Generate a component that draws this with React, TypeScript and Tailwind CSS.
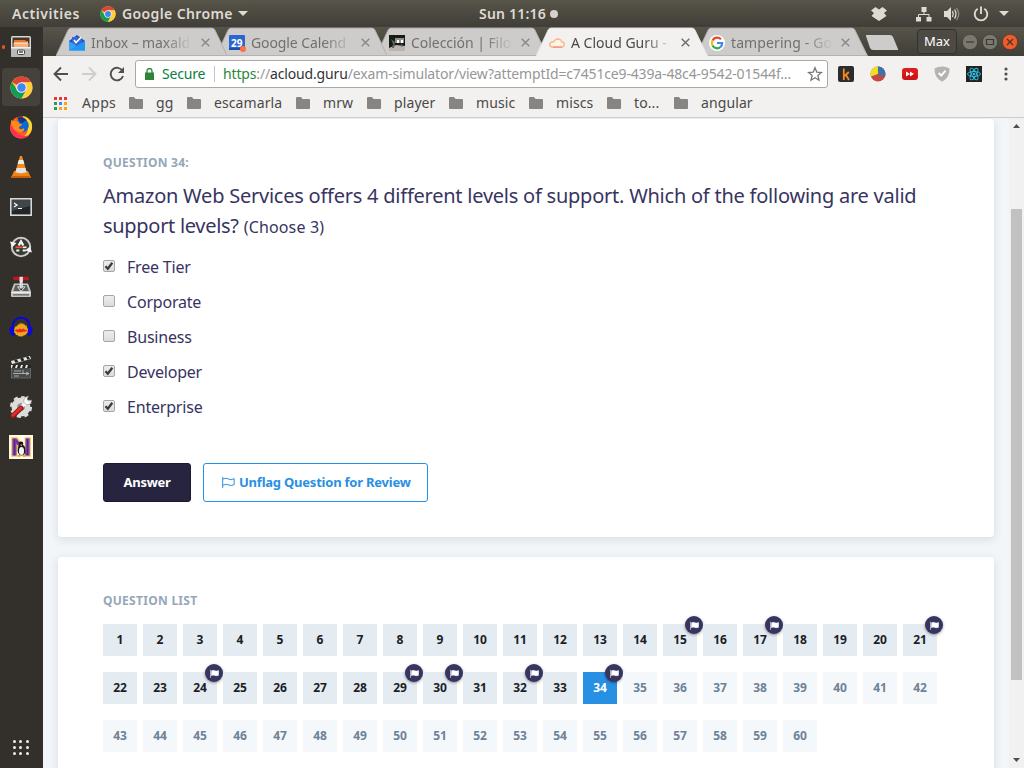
import React from "react";

type Mark = { label: string; width: string };

const bookmarks: Mark[] = [
  { label: "gg", width: "w-[58px]" },
  { label: "escamarla", width: "w-[109px]" },
  { label: "mrw", width: "w-[71px]" },
  { label: "player", width: "w-[82px]" },
  { label: "music", width: "w-[80px]" },
  { label: "miscs", width: "w-[78px]" },
  { label: "to...", width: "w-[67px]" },
  { label: "angular", width: "w-[100px]" },
];

const options = [
  { label: "Free Tier", checked: true },
  { label: "Corporate", checked: false },
  { label: "Business", checked: false },
  { label: "Developer", checked: true },
  { label: "Enterprise", checked: true },
];

const flagged = [15, 17, 21, 24, 29, 30, 32, 34];

function ChromeIcon({ className }: { className: string }) {
  return (
    <svg viewBox="0 0 48 48" className={className}>
      <circle cx="24" cy="24" r="23" fill="#fcc934" />
      <path d="M24 24 L4.1 12.5 A23 23 0 0 1 43.9 12.5 L24 13Z" fill="#db4437" />
      <path d="M4.1 12.5 A23 23 0 0 0 24 47 L34 29.5 L24 24 L14.5 29Z" fill="#0f9d58" />
      <path d="M24 13 H43.9 A23 23 0 0 1 24 47 L33.6 29.5Z" fill="#ffcd40" />
      <circle cx="24" cy="24" r="11" fill="#f1f1f1" />
      <circle cx="24" cy="24" r="8.8" fill="#4285f4" />
    </svg>
  );
}

function FilesIcon() {
  return (
    <svg viewBox="0 0 22 24" className="h-[24px] w-[22px]">
      <rect x="1" y="1" width="20" height="21" rx="1.5" fill="#d8d8d6" />
      <rect x="2.5" y="2.5" width="17" height="10" fill="#4a3427" />
      <path d="M4 5h11l1 1h2v3H4z" fill="#e8762c" />
      <path d="M3.500 8h15v4h-15z" fill="#f4b27a" />
      <path d="M4 7.500h14v1H4z" fill="#fff3e4" />
      <rect x="1" y="12" width="20" height="10" rx="1" fill="#b9b9b7" />
      <path d="M1 12h20v1.500H1z" fill="#eee" />
      <rect x="7.500" y="15" width="7" height="4.500" rx="1" fill="#f5f5f5" stroke="#444" />
      <path d="M9 17h4" stroke="#333" strokeWidth="1.300" />
    </svg>
  );
}

function FirefoxIcon() {
  return (
    <svg viewBox="0 0 24 24" className="h-[24px] w-[24px]">
      <circle cx="12" cy="12.500" r="11" fill="#ff5a1f" />
      <path d="M14 1c6 1 10 6 9 12-.8 6-5 10-11 10 6-3 8-7 6-12-1-4-5-5-4-10z" fill="#ffd42a" />
      <path d="M1 11c0 7 5 12.500 11.500 12.500 3 0 6-1.500 7.500-3.500-5 2-11 1-13-4-1-3-3-5-6-5z" fill="#ff2f5b" />
      <circle cx="13" cy="10.500" r="6.800" fill="#0a67d8" />
      <path d="M8 3c3-2 8-1 10 3-3-1-3 2-5 2s-3-3-5-5z" fill="#17347e" />
      <path d="M2 5c1 1 3 1 5 1 2 0 3 1 3 2.500l3 .5c0 2-3 2-3 4 1 2 4 1 5 0 1 3-2 5-5 4-4 0-8-5-8-12z" fill="#ff8a16" />
    </svg>
  );
}

function VlcIcon() {
  return (
    <svg viewBox="0 0 22 24" className="h-[24px] w-[22px]">
      <path d="M4 16h14l3 7H1z" fill="#ef8214" />
      <path d="M1 21h20v2H1z" fill="#c95e08" />
      <path d="M10 1h2l5 17c-2 2-10 2-12 0z" fill="#f58a1c" />
      <path d="M8.800 5h4.400l1.200 4H7.600z" fill="#eceeee" />
      <path d="M6.600 13h8.800l1.100 4c-2 1.500-9 1.500-11 0z" fill="#e3e5e5" />
    </svg>
  );
}

function TerminalIcon() {
  return (
    <svg viewBox="0 0 22 18" className="h-[18px] w-[22px]">
      <rect x=".8" y=".8" width="20.400" height="16.400" fill="#22262a" stroke="#d9d9d6" strokeWidth="1.600" />
      <path d="M2 2h18v6L2 13z" fill="#41464a" />
      <path d="M4 5l3 2-3 2M8 10.500h4" fill="none" stroke="#fff" strokeWidth="1.200" />
    </svg>
  );
}

function UpdaterIcon() {
  return (
    <svg viewBox="0 0 22 22" className="-mt-px h-[22px] w-[22px]">
      <circle cx="11" cy="11" r="9.2" fill="#3b3936" stroke="#c9c9c6" strokeWidth="2" />
      <path d="M0 5.500L6.500 7 2 11.500zM22 16.500L15 14.500l5-4z" fill="#f4f4f3" />
      <path d="M8.700 9.500L11 5.500l2.300 4" fill="none" stroke="#f4f4f4" strokeWidth="2.400" />
      <path d="M5.500 11.300h7.500" stroke="#ee5a24" strokeWidth="1.700" />
      <path d="M13 11.300h3.500" stroke="#f4f4f4" strokeWidth="1.700" />
      <path d="M6.300 14.500h3M12.700 14.500h3" stroke="#f4f4f4" strokeWidth="1.800" />
    </svg>
  );
}

function InstallerIcon() {
  return (
    <svg viewBox="0 0 22 22" className="-mt-px h-[22px] w-[22px]">
      <path d="M4 7.500h14l3 8V20q0 1-1 1H2q-1 0-1-1v-4.500z" fill="#c4c5c3" />
      <path d="M5.300 9h11.400l2 6H3.300z" fill="#5d5f5d" />
      <path d="M1.500 16h19v1.200h-19z" fill="#ededec" />
      <path d="M3 18.800h16" stroke="#777775" strokeWidth="1.600" />
      <path d="M7 10.500h8.500L11.200 16z" fill="#f4f4f4" />
      <path d="M8.500 11.300h5.500L11.200 14.800z" fill="#1f1f1f" />
      <path d="M11.200 3.500v9" stroke="#f2f2f2" strokeWidth="3" />
      <path d="M11.200 6v6" stroke="#bbb" strokeWidth="1" />
      <rect x="3" y=".8" width="16" height="3.400" rx="1.600" fill="#c51320" />
      <rect x="9.500" y=".8" width="3.400" height="4.200" fill="#e0e0df" />
    </svg>
  );
}

function AudacityIcon() {
  return (
    <svg viewBox="0 0 24 22" className="-mt-px h-[22px] w-[24px]">
      <path d="M5.500 12l1.500-2 1 .5 1-2.500 1 1 1-2.500 1 2 1-2 1 2 1-1 1 2 1.500 0 .5 2 1 2-.5 3.500-1.500 1-1 1.500-1-.5-1 1.500-1-.5-1 1-1-1-1.500.5-1-1.500-1.500 0-.5-1.500-1.500-1z" fill="#eba61f" />
      <path d="M5.500 14.500l2.500-1.200 1 .5 2-1.200 1.500.8 2-1 1 1 3 .8-2 1.500-2-.3-2 1-2-.5-2 .5-1-.9z" fill="#f3261a" />
      <path d="M3.500 12C3.500 5 7 1.800 12 1.800S20.500 5 20.500 12" fill="none" stroke="#0908d8" strokeWidth="1.900" />
      <path d="M4.500 10C1 10 0 12.500.5 15.500.900 18 3 20 5.500 20zM19.500 10c3.500 0 4.500 2.500 4 5.500-.4 2.500-2.500 4.500-5 4.500z" fill="#0b08db" />
    </svg>
  );
}

function ClapperIcon() {
  return (
    <svg viewBox="0 0 22 24" className="-mt-px h-[24px] w-[22px]">
      <rect x="1.500" y="11" width="19" height="12" fill="#484a49" stroke="#777" strokeWidth=".7" />
      <path d="M1 10h20v3H1z" fill="#e8e8e6" />
      <path d="M3 10h3l-1 3H2zM8 10h3l-1 3H7zM13 10h3l-1 3h-3zM18 10h3v3h-4z" fill="#252525" />
      <path d="M1 6L20 1l1 3L2 9z" fill="#e8e8e6" />
      <path d="M4 5.200l3-.8 1.500 2.600-3 .8zM10 3.600l3-.8 1.500 2.600-3 .8zM16 2l2.500-.6 1.600 2.600-2.600.7z" fill="#252525" />
      <path d="M4 16h7M13 15v4M3 18.500h16M16 17l3 1.500-3 1.500M4 21h5" fill="none" stroke="#c4c4c4" strokeWidth=".8" />
    </svg>
  );
}

function ToolsIcon() {
  return (
    <svg viewBox="0 0 24 24" className="h-[24px] w-[24px]">
      <circle cx="12" cy="12" r="6.500" fill="#b9b9b7" stroke="#dcdcdb" strokeWidth="6" />
      <circle cx="12" cy="12" r="9.800" fill="none" stroke="#dcdcdb" strokeWidth="2.600" strokeDasharray="4.100 3.600" />
      <circle cx="12" cy="12" r="3.800" fill="#8e8e8b" />
      <path d="M12 12.500l6-6" stroke="#fafafa" strokeWidth="3.200" />
      <path d="M15 7.500c-.7-3 1-6 4.500-6.300L18 4l1.500 2L22.500 5c.3 3-2.500 5.500-5.500 4.500z" fill="#fafafa" stroke="#8b8b89" strokeWidth=".6" />
      <path d="M3.700 20.800l8.300-7.600" stroke="#8f1518" strokeWidth="5" strokeLinecap="round" />
      <path d="M3.800 20.300l7.900-7.200" stroke="#d8302f" strokeWidth="3" strokeLinecap="round" />
    </svg>
  );
}

function PenguinIcon() {
  return (
    <svg viewBox="0 0 24 24" className="h-[24px] w-[24px]">
      <rect width="24" height="24" fill="#fffbe6" />
      <path d="M3 3h5l8.500 11V3H21v18h-4.500L7.500 10v11H3z" fill="#6f329b" stroke="#efc466" strokeWidth="1.600" />
      <path d="M3.500 3.500h4v17h-4zM16.500 3.500h4v17h-4z" fill="#7c3aa6" />
      <path d="M5.500 4v16M18.500 4v16" stroke="#4d2a7e" strokeWidth="1" />
      <ellipse cx="12.500" cy="15" rx="3.900" ry="5.500" fill="#15131b" />
      <ellipse cx="12.500" cy="16" rx="2.500" ry="4" fill="#f5f5f5" />
      <circle cx="12" cy="8.800" r="2.300" fill="#15131b" />
      <path d="M11 9.500h2.600l-1.300 1.700zM8.500 20h3v1.700h-3zM13.500 20h3v1.700h-3z" fill="#f0a51c" />
    </svg>
  );
}

function TopBar() {
  return (
    <header className="flex h-[27px] shrink-0 items-center bg-linear-to-b from-[#575449] to-[#403e38] text-[14px] leading-[27px] font-semibold text-[#dfdbd2]">
      <span className="w-[100px] pl-[12px] tracking-[0.55px]">Activities</span>
      <ChromeIcon className="h-[16px] w-[16px]" />
      <span className="w-[116px] pl-[6px] tracking-[0.38px] whitespace-nowrap">Google Chrome</span>
      <svg viewBox="0 0 10 5" className="ml-[6px] h-[5px] w-[10px]"><path d="M0 0h10L5 5z" fill="#dfdbd2" /></svg>
      <span className="ml-[231px] w-[71px] tracking-[0.2px] whitespace-nowrap">Sun 11:16</span>
      <span className="h-[8px] w-[8px] rounded-full bg-[#d6d2ca]" />
      <svg viewBox="0 0 16 14" className="ml-[313px] h-[14px] w-[16px]">
        <path d="M4.500 0L8 2.500 11.500 0 16 3.500 13 6l2.500 3-3 2L8 14l-4.500-3-3-2L3 6 0 3.500z" fill="#dfdbd2" />
      </svg>
      <svg viewBox="0 0 16 16" className="ml-[29px] h-[16px] w-[16px]">
        <path d="M5.500 1h5v5h-5zM0 11h5v4.500H0zM10.500 11H15.500v4.500h-5z" fill="#dfdbd2" />
        <path d="M8 6v3M2.500 11V8.500h10.500V11" fill="none" stroke="#dfdbd2" />
      </svg>
      <svg viewBox="0 0 16 16" className="ml-[12px] h-[16px] w-[16px]">
        <path d="M0 5h3l4-4v14l-4-4H0z" fill="#dfdbd2" />
        <path d="M8.500 5c1 2 1 4 0 6M10.500 3.500c2 3 2 6 0 9" fill="none" stroke="#dfdbd2" strokeWidth="1.300" />
        <path d="M12.500 2c3 4 3 8 0 12" fill="none" stroke="#8c897f" strokeWidth="1.300" />
      </svg>
      <svg viewBox="0 0 16 16" className="ml-[13px] h-[16px] w-[16px]">
        <path d="M4.700 2.700a6.300 6.300 0 1 0 6.600 0M8 .5v7.500" fill="none" stroke="#dfdbd2" strokeWidth="1.900" />
      </svg>
      <svg viewBox="0 0 10 5" className="ml-[10px] h-[5px] w-[10px]"><path d="M0 0h10L5 5z" fill="#dfdbd2" /></svg>
    </header>
  );
}

function Dock() {
  const apps = [
    <FilesIcon />, <ChromeIcon className="h-[23px] w-[23px]" />, <FirefoxIcon />, <VlcIcon />, <TerminalIcon />, <UpdaterIcon />,
    <InstallerIcon />, <AudacityIcon />, <ClapperIcon />, <ToolsIcon />, <PenguinIcon />,
  ];
  return (
    <aside className="flex w-[43px] shrink-0 flex-col bg-[#33302c]">
      {apps.map((icon, i) => (
        <div key={i} className="flex h-[40px] items-center">
          <span className={i < 2 ? "ml-[2px] h-[4px] w-[3px] rounded-full bg-[#e95420]" : "ml-[2px] w-[3px]"} />
          <span className={i === 1 ? "-ml-[3px] flex h-[38px] w-[38px] items-center justify-center rounded-[4px] bg-[#45423e]" : "-ml-[3px] flex h-[38px] w-[38px] items-center justify-center"}>
            {icon}
          </span>
        </div>
      ))}
      <div className="mt-auto mb-[13px] ml-[13px] grid w-[16px] grid-cols-3 gap-[3px]">
        {Array.from({ length: 9 }, (_, i) => <span key={i} className="h-[3px] w-[3px] rounded-full bg-[#eeeeec]" />)}
      </div>
    </aside>
  );
}

function Tab({ title, icon, active, layer, textStyle }: { title: string; icon: React.ReactNode; active?: boolean; layer: string; textStyle: string }) {
  return (
    <div className={`relative -mr-[12px] h-[29px] w-[172px] shrink-0 ${layer}`}>
      <svg viewBox="0 0 172 29" className="absolute inset-0 h-[29px] w-[172px]">
        <path d="M0 29L12 3Q13 1 15 1H156Q158 1 159 3L172 29Z" fill={active ? "#f2f1f0" : "#cecccb"} />
        <path d="M0 28.500L12 3Q13 1 15 1H156Q158 1 159 3L171 28.500" fill="none" stroke={active ? "#e4e3e1" : "#aaa8a6"} strokeWidth=".8" />
        {!active && <path d="M1 28.500H171" stroke="#b5b3b1" />}
      </svg>
      <div className="relative flex h-[29px] items-center pt-[2px] pl-[13px]">
        <span className="flex w-[16px] justify-center">{icon}</span>
        <span className={`ml-[6px] w-[104px] overflow-hidden text-[14px] leading-[20px] whitespace-nowrap [mask-image:linear-gradient(to_right,black_70%,transparent_98%)] ${textStyle}`}>{title}</span>
        <svg viewBox="0 0 9 9" className="ml-[6px] h-[9px] w-[9px]">
          <path d="M.7.7l7.600 7.600M8.300.7L.7 8.300" stroke={active ? "#6b6b6b" : "#888786"} strokeWidth="1.400" />
        </svg>
      </div>
    </div>
  );
}

function TabStrip() {
  return (
    <div className="flex h-[29px] shrink-0 bg-linear-to-b from-[#57544a] to-[#403e38] pl-[13px]">
      <div className="flex w-[800px] shrink-0">
        <Tab layer="z-20" title="Inbox – maxald" textStyle="text-[#71706f] tracking-[-0.1px]" icon={
          <svg viewBox="0 0 16 16" className="h-[16px] w-[16px]">
            <path d="M0 6L8 0l8 6v9H0z" fill="#1b4fc0" /><path d="M3 2h10v8H3z" fill="#3367d6" />
            <path d="M0 6l8 5 8-5v9.500H0z" fill="#36a0f4" /><path d="M0 15.500L16 6v9.500z" fill="#2196f3" />
            <path d="M5 5l2 2.500L12.500 2" fill="none" stroke="#fff" strokeWidth="1.600" />
          </svg>} />
        <Tab layer="z-10" title="Google Calend" textStyle="text-[#71706f] tracking-[-0.1px]" icon={
          <svg viewBox="0 0 18 18" className="h-[18px] w-[18px] shrink-0">
            <rect x="1" y="1" width="16" height="15" rx="1" fill="#2a66d0" />
            <path d="M1 14h16v2H1z" fill="#1b4fb0" />
            <text x="8.700" y="12.500" textAnchor="middle" fontSize="10" fontWeight="700" fill="#fff" fontFamily="Noto Sans">29</text>
            <circle cx="15" cy="15" r="3" fill="#ff7043" />
          </svg>} />
        <Tab layer="z-0" title="Colección | Filo" textStyle="text-[#71706f] tracking-[-0.05px]" icon={
          <svg viewBox="0 0 16 16" className="h-[16px] w-[16px]">
            <rect width="16" height="16" fill="#161b16" /><path d="M6 3h9v5H6z" fill="#8f918b" />
            <path d="M0 13l7-3 9 1v5H0z" fill="#bdb5ab" /><path d="M8 5h2v3H8zM12 5h2v3h-2z" fill="#fff" />
            <path d="M2 4l4 3-1 6H3l1-4zM12 8l2 3-2 1z" fill="#596169" />
          </svg>} />
        <Tab layer="z-30" active title="A Cloud Guru - " textStyle="text-[#4b4a49] tracking-[0px]" icon={
          <svg viewBox="0 0 16 10" className="h-[10px] w-[16px]">
            <path d="M4 9h8.500a2.600 2.600 0 0 0 .2-5.200C12 1.200 9 .3 6.800 1.600 5.500 2.200 5 3.500 4.500 4 2 3.500.7 5 .7 6.500S2 9 4 9z" fill="#fff3ea" stroke="#f9b27f" strokeWidth="1.300" />
            <path d="M4 9.200h8.500" stroke="#f0918a" strokeWidth="1.200" />
          </svg>} />
        <Tab layer="z-0" title="tampering - Go" textStyle="text-[#71706f] tracking-[0.1px]" icon={
          <svg viewBox="0 0 16 16" className="h-[16px] w-[16px]">
            <circle cx="8" cy="8" r="8" fill="#fff" />
            <path d="M12 4.200A5.300 5.300 0 0 0 3.500 5.500" fill="none" stroke="#ea4335" strokeWidth="2.200" />
            <path d="M3.500 5.500a5.300 5.300 0 0 0 0 5" fill="none" stroke="#fbbc05" strokeWidth="2.200" />
            <path d="M3.500 10.500a5.200 5.200 0 0 0 8 1.500" fill="none" stroke="#34a853" strokeWidth="2.200" />
            <path d="M8 8h5.200c0 1.800-.6 3-1.700 4" fill="none" stroke="#4285f4" strokeWidth="2.200" />
          </svg>} />
      </div>
      <svg viewBox="0 0 34 16" className="mt-[8px] ml-[9px] h-[16px] w-[34px] shrink-0">
        <path d="M1 0h24q2 0 3 2l5 12q1 1-1 1H8q-2 0-3-2L1 1z" fill="#cecccb" />
      </svg>
      <div className="mt-[2px] ml-[18px] flex h-[25px] w-[40px] shrink-0 items-center justify-center rounded-[4px] border border-[#33312c] bg-[#4c4a43] text-[13px] text-white">Max</div>
      <div className="mt-[7px] ml-[5px] flex gap-[4px]">
        {["M4 8h8", "M4.500 5.500h7v5h-7z", "M5 5l6 6M11 5l-6 6"].map((d, i) => (
          <svg key={d} viewBox="0 0 16 16" className="h-[16px] w-[16px]">
            <circle cx="8" cy="8" r="7.700" fill={i === 2 ? "#f15a29" : "#7b796f"} stroke="#33312d" strokeWidth=".6" />
            <path d={d} fill="none" stroke="#3a3833" strokeWidth="1.200" />
          </svg>
        ))}
      </div>
    </div>
  );
}

function Toolbar() {
  return (
    <div className="flex h-[36px] shrink-0 items-center bg-[#f2f1f0]">
      <svg viewBox="0 0 16 16" className="ml-[10px] h-[16px] w-[16px]"><path d="M15 8H2M8 1.500L1.500 8 8 14.500" fill="none" stroke="#504f4e" strokeWidth="1.900" /></svg>
      <svg viewBox="0 0 16 16" className="ml-[12px] h-[16px] w-[16px]"><path d="M1 8h13M8 1.500L14.500 8 8 14.500" fill="none" stroke="#cfcecd" strokeWidth="1.900" /></svg>
      <svg viewBox="0 0 16 16" className="ml-[12px] h-[16px] w-[16px]">
        <path d="M13.500 5A6.300 6.300 0 1 0 14 10" fill="none" stroke="#504f4e" strokeWidth="1.900" /><path d="M15 1v6H9z" fill="#504f4e" />
      </svg>
      <div className="ml-[10px] flex h-[28px] w-[693px] items-center rounded-[3px] border border-[#aaa9a8] bg-white text-[14px] leading-[20px] whitespace-nowrap">
        <svg viewBox="0 0 9 12" className="ml-[9px] h-[12px] w-[9px]"><path d="M0 4.500h9V12H0z" fill="#2d8638" /><path d="M2 5V3a2.500 2.500 0 0 1 5 0v2" fill="none" stroke="#2d8638" strokeWidth="1.300" /></svg>
        <span className="ml-[8px] w-[52px] tracking-[-0.2px] text-[#0b8043]">Secure</span>
        <span className="h-[16px] w-px bg-[#c4c4c4]" />
        <span className="ml-[8px] w-[571px] tracking-[-0.155px] text-[#979797]"><span className="text-[#2d8638]">https</span>://<span className="text-[#333]">acloud.guru</span>/exam-simulator/view?attemptId=c7451ce9-439a-48c4-9542-01544f...</span>
        <svg viewBox="0 0 16 16" className="ml-[13px] h-[16px] w-[16px] shrink-0"><path d="M8 1.700l1.800 4.400 4.700.4-3.600 3 1.100 4.700L8 11.700l-4 2.500 1.100-4.700-3.600-3 4.700-.4z" fill="none" stroke="#777" strokeWidth="1.300" /></svg>
      </div>
      <svg viewBox="0 0 16 16" className="ml-[10px] h-[16px] w-[16px]">
        <rect width="16" height="16" rx="2" fill="#2a2c2e" /><path d="M5.800 2.500v11.500M10.800 6L6.500 10M8 9l3 5" fill="none" stroke="#f68a1e" strokeWidth="1.800" />
      </svg>
      <svg viewBox="0 0 16 16" className="ml-[16px] h-[16px] w-[16px]">
        <circle cx="8" cy="8" r="7.500" fill="#c24a45" /><path d="M8 8V.5A7.500 7.500 0 0 0 1 10.500z" fill="#f3dc22" /><path d="M8 8V.5a7.500 7.500 0 0 1 7 10z" fill="#3a74ad" />
      </svg>
      <svg viewBox="0 0 16 12" className="ml-[16px] h-[12px] w-[16px]">
        <rect width="16" height="12" rx="3" fill="#e01b1b" /><path d="M1 6h14v3q0 3-3 3H4q-3 0-3-3z" fill="#b80f12" opacity=".5" /><path d="M4 3.500L8 6 4 8.500zM8 3.500L12 6 8 8.500z" fill="#fff" />
      </svg>
      <svg viewBox="0 0 16 16" className="ml-[16px] h-[16px] w-[16px]">
        <path d="M.5 2.500Q4 .5 8 .5t7.500 2C15.500 9 13 13 8 15.700 3 13 .5 9 .5 2.500z" fill="#b3b3b3" /><path d="M4.700 7l2.600 2.700 4.200-5" fill="none" stroke="#fff" strokeWidth="1.900" />
      </svg>
      <svg viewBox="0 0 16 16" className="ml-[16px] h-[16px] w-[16px]">
        <rect width="16" height="16" fill="#222" />
        <g fill="none" stroke="#2dc5ea" strokeWidth=".9"><ellipse cx="8" cy="8" rx="6.500" ry="2.500" /><ellipse cx="8" cy="8" rx="6.500" ry="2.500" transform="rotate(60 8 8)" /><ellipse cx="8" cy="8" rx="6.500" ry="2.500" transform="rotate(120 8 8)" /></g>
        <circle cx="8" cy="8" r="1.300" fill="#2dc5ea" />
      </svg>
      <svg viewBox="0 0 4 14" className="ml-[22px] h-[14px] w-[4px]"><g fill="#504f4e"><circle cx="2" cy="2" r="1.600" /><circle cx="2" cy="7" r="1.600" /><circle cx="2" cy="12" r="1.600" /></g></svg>
    </div>
  );
}

function BookmarkBar() {
  const colors = ["#f0343c", "#f0343c", "#f0343c", "#2e9b51", "#4285f4", "#f7a51c", "#2e9b51", "#f7a51c", "#f7a51c"];
  return (
    <div className="flex h-[26px] shrink-0 items-center border-b border-[#cdcccb] bg-[#f2f1f0] pb-[4px] text-[14px] leading-[20px] text-[#4a4948]">
      <svg viewBox="0 0 13 13" className="mt-px ml-[11px] h-[13px] w-[13px]">
        {colors.map((c, i) => <rect key={i} x={(i % 3) * 5} y={Math.floor(i / 3) * 5} width="3" height="3" fill={c} />)}
      </svg>
      <span className="ml-[15px] w-[47px] tracking-[0.3px]">Apps</span>
      {bookmarks.map((b) => (
        <span key={b.label} className={`flex shrink-0 items-center ${b.width}`}>
          <svg viewBox="0 0 14 12" className="mt-px mr-[13px] h-[12px] w-[14px] shrink-0"><path d="M1 0h4l1.500 2H13q1 0 1 1v8q0 1-1 1H1q-1 0-1-1V1q0-1 1-1z" fill="#868583" /></svg>
          <span className="tracking-[0.1px] whitespace-nowrap">{b.label}</span>
        </span>
      ))}
    </div>
  );
}

function FlagBadge() {
  return (
    <span className="absolute -top-[8px] -right-[6px] flex h-[18px] w-[18px] items-center justify-center rounded-full bg-[#37345f] shadow-[0_1px_3px_rgba(0,0,0,0.4)]">
      <svg viewBox="0 0 9 9" className="h-[9px] w-[9px]"><path d="M.5.800v8" stroke="#fff" strokeOpacity=".75" strokeWidth=".8" /><path d="M1.500 1.800q1.700-.8 3.300-.1t3.700-.2v4.700q-2 .9-3.700.2t-3.300.3z" fill="#fff" stroke="#fff" strokeWidth=".5" /></svg>
    </span>
  );
}

function QuestionCell({ n }: { n: number }) {
  const tone = n === 34 ? "bg-[#2890e3] text-white" : n < 34 ? "bg-[#e4ebf1] text-[#1d1d1f]" : "bg-[#f5f8fb] text-[#6d8296]";
  return (
    <div className={`relative flex h-[32px] w-[34px] items-center justify-center pb-px text-[12px] font-bold ${tone}`}>
      {n}
      {flagged.includes(n) && <FlagBadge />}
    </div>
  );
}

function Page() {
  return (
    <div className="flex min-h-0 flex-1 bg-[#f2f6f9]">
      <main className="flex min-w-0 flex-1 flex-col gap-[20px] overflow-hidden pt-px pr-[15px] pl-[15px]">
        <section className="h-[418px] shrink-0 rounded-[4px] bg-white px-[45px] pt-[35px] text-[#37345f] shadow-[0_2px_10px_rgba(55,60,95,0.14)]">
          <h2 className="text-[12px] leading-[18px] font-bold tracking-[0.25px] text-[#95a7b7]">QUESTION 34:</h2>
          <p className="mt-[9px] text-[20px] leading-[30px] tracking-[-0.235px] whitespace-nowrap">
            Amazon Web Services offers 4 different levels of support. Which of the following are valid<br />
            <span className="tracking-[-0.3px]">support levels?</span> <span className="text-[16px] tracking-[0.15px]">(Choose 3)</span>
          </p>
          <div className="mt-[7px]">
            {options.map((o) => (
              <label key={o.label} className="flex h-[35px] items-center text-[16px] tracking-[-0.2px]">
                <span className="-mt-[1px] mr-[12px] flex h-[12px] w-[12px] items-center justify-center rounded-[2px] border border-[#a6a6a6] bg-linear-to-b from-[#ededed] to-[#dcdcdc]">
                  {o.checked && <svg viewBox="0 0 10 10" className="h-[10px] w-[10px] shrink-0"><path d="M1.500 5.300l2.300 2.400 4.500-6" fill="none" stroke="#3c3c3c" strokeWidth="2.300" /></svg>}
                </span>
                {o.label}
              </label>
            ))}
          </div>
          <div className="mt-[39px] flex gap-[12px] text-[13px] font-bold">
            <button className="h-[39px] w-[88px] rounded-[3px] border border-[#1b1a30] bg-[#26243f] tracking-[-0.3px] text-white">Answer</button>
            <button className="flex h-[39px] w-[225px] items-center rounded-[3px] border border-[#2890e3] pl-[18px] tracking-[-0.22px] whitespace-nowrap text-[#2890e3]">
              <svg viewBox="0 0 13 11" className="mr-[4px] h-[11px] w-[13px]"><path d="M.7 0v11M1 2q3-1.500 5.500 0t5.700-.3v6q-3 1.500-5.700.2T1 8.200" fill="none" stroke="#2890e3" /></svg>
              Unflag Question for Review
            </button>
          </div>
        </section>
        <section className="h-[300px] shrink-0 rounded-t-[4px] bg-white px-[45px] pt-[35px] shadow-[0_2px_10px_rgba(55,60,95,0.14)]">
          <h2 className="text-[12px] leading-[18px] font-bold tracking-[0.28px] text-[#95a7b7]">QUESTION LIST</h2>
          <div className="mt-[14px] grid w-[840px] grid-cols-[repeat(21,40px)] gap-y-[16px]">
            {Array.from({ length: 60 }, (_, i) => <QuestionCell key={i} n={i + 1} />)}
          </div>
        </section>
      </main>
      <div className="flex w-[15px] shrink-0 flex-col items-center bg-[#f1f1f1]">
        <svg viewBox="0 0 7 4" className="mt-[6px] h-[4px] w-[7px]"><path d="M0 4h7L3.500 0z" fill="#505050" /></svg>
        <div className="mt-[81px] h-[471px] w-[11px] bg-[#c1c1c1]" />
        <svg viewBox="0 0 7 4" className="mt-auto mb-[6px] h-[4px] w-[7px]"><path d="M0 0h7L3.500 4z" fill="#505050" /></svg>
      </div>
    </div>
  );
}

export default function App() {
  return (
    <div className="flex h-[768px] w-[1024px] flex-col overflow-hidden font-['Noto_Sans',sans-serif]">
      <TopBar />
      <div className="flex min-h-0 flex-1">
        <Dock />
        <div className="flex min-w-0 flex-1 flex-col overflow-hidden">
          <TabStrip />
          <Toolbar />
          <BookmarkBar />
          <Page />
        </div>
      </div>
    </div>
  );
}
